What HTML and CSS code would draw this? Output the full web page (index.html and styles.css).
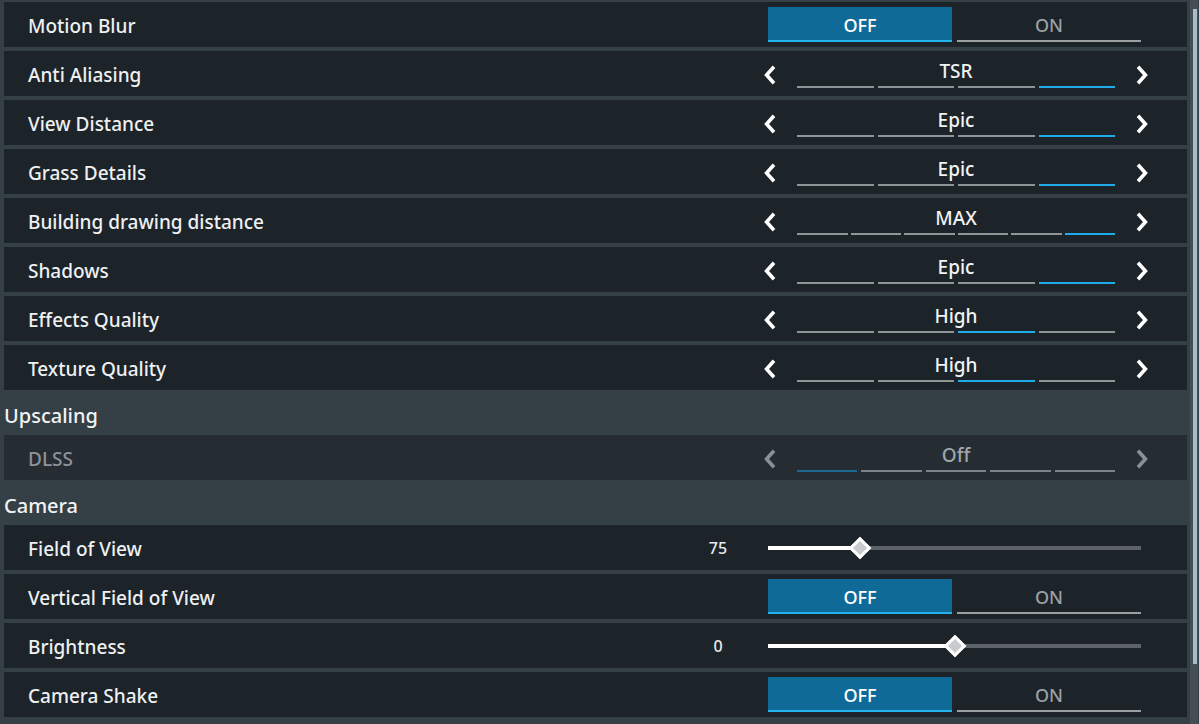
FILE: index.html
```html
<!DOCTYPE html>
<html lang="en">
<head>
<meta charset="utf-8">
<title>Settings</title>
<link rel="stylesheet" href="styles.css">
</head>
<body>
<div class="page">
  <div class="list">
    <div class="row">
      <div class="label">Motion Blur</div>
      <div class="toggle"><div class="opt on">OFF</div><div class="opt">ON</div></div>
    </div>
    <div class="row">
      <div class="label">Anti Aliasing</div>
      <div class="selector">
        <svg class="chev" viewBox="0 0 12 20"><polyline points="10,1.8 2.6,10 10,18.2"/></svg>
        <div class="sel-mid"><div class="val">TSR</div><div class="segs"><i></i><i></i><i></i><i class="act"></i></div></div>
        <svg class="chev" viewBox="0 0 12 20"><polyline points="2,1.8 9.4,10 2,18.2"/></svg>
      </div>
    </div>
    <div class="row">
      <div class="label">View Distance</div>
      <div class="selector">
        <svg class="chev" viewBox="0 0 12 20"><polyline points="10,1.8 2.6,10 10,18.2"/></svg>
        <div class="sel-mid"><div class="val">Epic</div><div class="segs"><i></i><i></i><i></i><i class="act"></i></div></div>
        <svg class="chev" viewBox="0 0 12 20"><polyline points="2,1.8 9.4,10 2,18.2"/></svg>
      </div>
    </div>
    <div class="row">
      <div class="label">Grass Details</div>
      <div class="selector">
        <svg class="chev" viewBox="0 0 12 20"><polyline points="10,1.8 2.6,10 10,18.2"/></svg>
        <div class="sel-mid"><div class="val">Epic</div><div class="segs"><i></i><i></i><i></i><i class="act"></i></div></div>
        <svg class="chev" viewBox="0 0 12 20"><polyline points="2,1.8 9.4,10 2,18.2"/></svg>
      </div>
    </div>
    <div class="row">
      <div class="label">Building drawing distance</div>
      <div class="selector">
        <svg class="chev" viewBox="0 0 12 20"><polyline points="10,1.8 2.6,10 10,18.2"/></svg>
        <div class="sel-mid"><div class="val">MAX</div><div class="segs segs6"><i></i><i></i><i></i><i></i><i></i><i class="act"></i></div></div>
        <svg class="chev" viewBox="0 0 12 20"><polyline points="2,1.8 9.4,10 2,18.2"/></svg>
      </div>
    </div>
    <div class="row">
      <div class="label">Shadows</div>
      <div class="selector">
        <svg class="chev" viewBox="0 0 12 20"><polyline points="10,1.8 2.6,10 10,18.2"/></svg>
        <div class="sel-mid"><div class="val">Epic</div><div class="segs"><i></i><i></i><i></i><i class="act"></i></div></div>
        <svg class="chev" viewBox="0 0 12 20"><polyline points="2,1.8 9.4,10 2,18.2"/></svg>
      </div>
    </div>
    <div class="row">
      <div class="label">Effects Quality</div>
      <div class="selector">
        <svg class="chev" viewBox="0 0 12 20"><polyline points="10,1.8 2.6,10 10,18.2"/></svg>
        <div class="sel-mid"><div class="val">High</div><div class="segs"><i></i><i></i><i class="act"></i><i></i></div></div>
        <svg class="chev" viewBox="0 0 12 20"><polyline points="2,1.8 9.4,10 2,18.2"/></svg>
      </div>
    </div>
    <div class="row">
      <div class="label">Texture Quality</div>
      <div class="selector">
        <svg class="chev" viewBox="0 0 12 20"><polyline points="10,1.8 2.6,10 10,18.2"/></svg>
        <div class="sel-mid"><div class="val">High</div><div class="segs"><i></i><i></i><i class="act"></i><i></i></div></div>
        <svg class="chev" viewBox="0 0 12 20"><polyline points="2,1.8 9.4,10 2,18.2"/></svg>
      </div>
    </div>

    <div class="section">Upscaling</div>
    <div class="row disabled">
      <div class="label">DLSS</div>
      <div class="selector">
        <svg class="chev" viewBox="0 0 12 20"><polyline points="10,1.8 2.6,10 10,18.2"/></svg>
        <div class="sel-mid"><div class="val">Off</div><div class="segs"><i class="act"></i><i></i><i></i><i></i><i></i></div></div>
        <svg class="chev" viewBox="0 0 12 20"><polyline points="2,1.8 9.4,10 2,18.2"/></svg>
      </div>
    </div>

    <div class="section">Camera</div>
    <div class="row">
      <div class="label">Field of View</div>
      <div class="slider">
        <div class="num">75</div>
        <div class="track"><div class="fill" style="width:24.7%"></div><div class="thumb" style="left:24.7%"></div></div>
      </div>
    </div>
    <div class="row">
      <div class="label">Vertical Field of View</div>
      <div class="toggle"><div class="opt on">OFF</div><div class="opt">ON</div></div>
    </div>
    <div class="row">
      <div class="label">Brightness</div>
      <div class="slider">
        <div class="num">0</div>
        <div class="track"><div class="fill" style="width:50%"></div><div class="thumb" style="left:50%"></div></div>
      </div>
    </div>
    <div class="row">
      <div class="label">Camera Shake</div>
      <div class="toggle"><div class="opt on">OFF</div><div class="opt">ON</div></div>
    </div>
  </div>
  <div class="scrollbar"><div class="sb-thumb"></div></div>
</div>
</body>
</html>
```

FILE: styles.css
```css
* { box-sizing: border-box; }
html, body {
  margin: 0;
  padding: 0;
  height: 100%;
  overflow: hidden;
  background: #353f46;
  font-family: "Noto Sans", "Open Sans", sans-serif;
  color: #eef0f1;
}
.page {
  display: flex;
  height: 724px;
  padding: 2px 1px 0 4px;
  gap: 3px;
}
.list {
  width: 1183px;
  display: flex;
  flex-direction: column;
  gap: 4px;
}
.row {
  flex: 0 0 45px;
  height: 45px;
  background: #1c2329;
  display: flex;
  align-items: center;
  justify-content: space-between;
  padding-left: 24px;
}
.label {
  font-size: 19px;
  font-weight: 500;
  line-height: 24px;
  padding-top: 3px;
  color: #eef0f1;
}
.section {
  flex: 0 0 37px;
  height: 37px;
  font-size: 20px;
  font-weight: 500;
  line-height: 22px;
  padding-top: 11px;
  color: #f1f3f4;
}

/* toggle */
.toggle {
  display: flex;
  gap: 5px;
  width: 373px;
  margin-right: 46px;
  height: 35px;
  align-self: flex-start;
  margin-top: 5px;
}
.opt {
  flex: 1;
  display: flex;
  align-items: center;
  justify-content: center;
  font-size: 18px;
  font-weight: 500;
  padding-top: 2px;
  color: #9aa0a4;
  border-bottom: 2px solid #9ca0a3;
}
.opt.on {
  background: #106a97;
  color: #ffffff;
  border-bottom-color: #22b2ec;
}

/* selector */
.selector {
  display: flex;
  align-items: center;
  width: 384px;
  margin-right: 39px;
  height: 45px;
}
.chev {
  width: 12px;
  height: 20px;
  flex: 0 0 12px;
  margin-top: 2px;
}
.chev polyline {
  fill: none;
  stroke: #ffffff;
  stroke-width: 3.6;
  stroke-linejoin: miter;
}
.sel-mid {
  flex: 1;
  height: 45px;
  margin: 0 21px 0 21px;
  display: flex;
  flex-direction: column;
  justify-content: flex-end;
  padding-bottom: 8px;
}
.val {
  text-align: center;
  font-size: 19px;
  font-weight: 500;
  line-height: 24px;
  margin-bottom: 3px;
  color: #f1f3f4;
}
.segs {
  display: flex;
  gap: 4px;
  height: 2px;
}
.segs6 { gap: 3px; }
.segs i {
  flex: 1;
  background: #8f9497;
}
.segs i.act { background: #20acea; }

.disabled { background: #252d33; }
.disabled .label { color: #8d9398; }
.disabled .chev polyline { stroke: #8a9095; }
.disabled .val { color: #a0a5a9; }
.disabled .segs i { background: #7d8388; }
.disabled .segs i.act { background: #1d6991; }

/* slider */
.slider {
  display: flex;
  align-items: center;
  margin-right: 46px;
}
.num {
  width: 40px;
  text-align: center;
  font-size: 16px;
  font-weight: 500;
  margin-right: 30px;
  color: #e8eaeb;
}
.track {
  position: relative;
  width: 373px;
  height: 4px;
  background: #5c6267;
}
.fill {
  height: 4px;
  background: #ffffff;
}
.thumb {
  position: absolute;
  top: 50%;
  width: 16px;
  height: 16px;
  background: #c9cacc;
  border: 3px solid #ffffff;
  transform: translate(-50%, -50%) rotate(45deg);
}

/* scrollbar */
.scrollbar {
  width: 8px;
  height: 724px;
  margin-top: -2px;
  background: #454e54;
  padding: 9px 1px 0 3px;
}
.sb-thumb {
  height: 655px;
  background: #a8bec6;
}
```
